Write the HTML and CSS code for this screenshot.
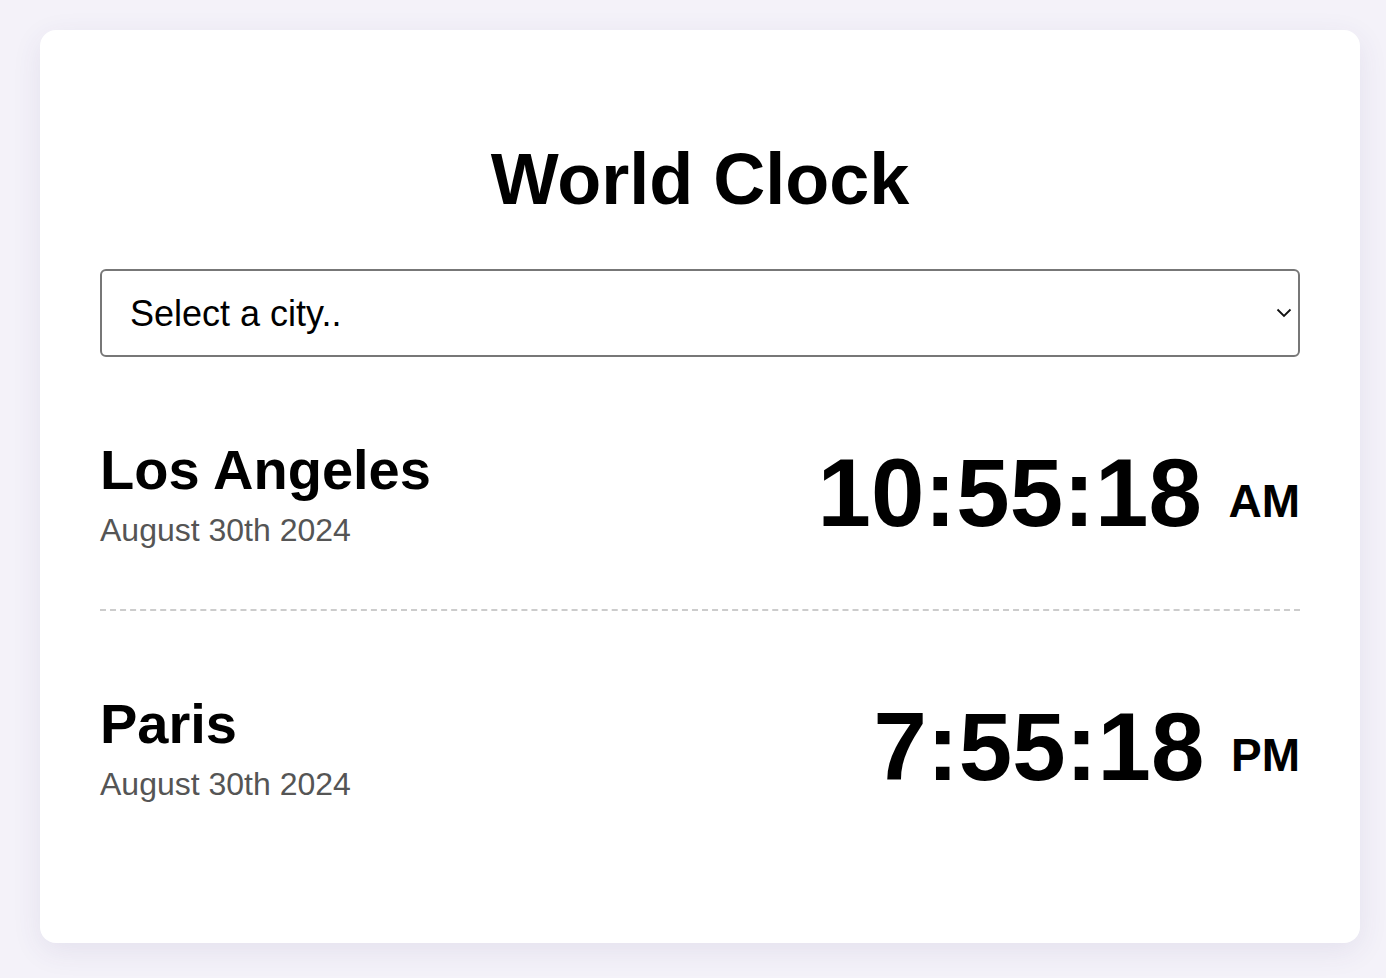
FILE: index.html
```html
<!DOCTYPE html>
<html lang="en">
<head>
<meta charset="utf-8">
<title>World Clock</title>
<link rel="stylesheet" href="styles.css">
</head>
<body>
<main class="card">
  <h1 class="title">World Clock</h1>
  <div class="select-wrap">
    <select class="city-select">
      <option>Select a city..</option>
      <option>Los Angeles</option>
      <option>Paris</option>
    </select>
    <svg class="chevron" width="16" height="10" viewBox="0 0 16 10" aria-hidden="true"><path d="M1.5 1.5 L8 8 L14.5 1.5" fill="none" stroke="#111" stroke-width="1.8"/></svg>
  </div>
  <section class="cities">
    <div class="city">
      <div class="city-info">
        <div class="city-name">Los Angeles</div>
        <div class="city-date">August 30th 2024</div>
      </div>
      <div class="city-time">10:55:18 <span class="ampm">AM</span></div>
    </div>
    <div class="city">
      <div class="city-info">
        <div class="city-name">Paris</div>
        <div class="city-date">August 30th 2024</div>
      </div>
      <div class="city-time">7:55:18 <span class="ampm">PM</span></div>
    </div>
  </section>
</main>
</body>
</html>
```
FILE: styles.css
```css
html, body {
  margin: 0;
  background: #f4f2f9;
}
body {
  padding: 30px 26px 36px 40px;
  font-family: "Liberation Sans", Arial, Helvetica, sans-serif;
  color: #000;
}
.card {
  background: #fff;
  border-radius: 16px;
  box-shadow: 0 8px 30px rgba(70, 50, 120, 0.09);
  padding: 60px 60px 80px;
}
.title {
  margin: 48px 0 49px;
  font-size: 72px;
  font-weight: 700;
  text-align: center;
  line-height: normal;
}
.select-wrap {
  position: relative;
}
.city-select {
  display: block;
  width: 100%;
  height: 88px;
  box-sizing: border-box;
  appearance: none;
  -webkit-appearance: none;
  background: #fff;
  border: 2px solid #777;
  border-radius: 6px;
  padding: 0 28px;
  font-family: "Liberation Sans", Arial, sans-serif;
  font-size: 36px;
  color: #000;
}
.chevron {
  position: absolute;
  right: 8px;
  top: 39px;
}
.city {
  display: flex;
  align-items: center;
  justify-content: space-between;
  padding: 80px 0 60px;
  border-bottom: 2px dashed #cccccc;
}
.city:last-child {
  border-bottom: none;
}
.city-name {
  font-size: 56px;
  font-weight: 700;
  line-height: normal;
}
.city-date {
  margin-top: 10px;
  font-size: 32px;
  color: #555;
  line-height: normal;
}
.city-time {
  font-size: 96px;
  font-weight: 700;
  line-height: normal;
  white-space: nowrap;
}
.ampm {
  font-size: 46px;
  vertical-align: 9px;
}
```
